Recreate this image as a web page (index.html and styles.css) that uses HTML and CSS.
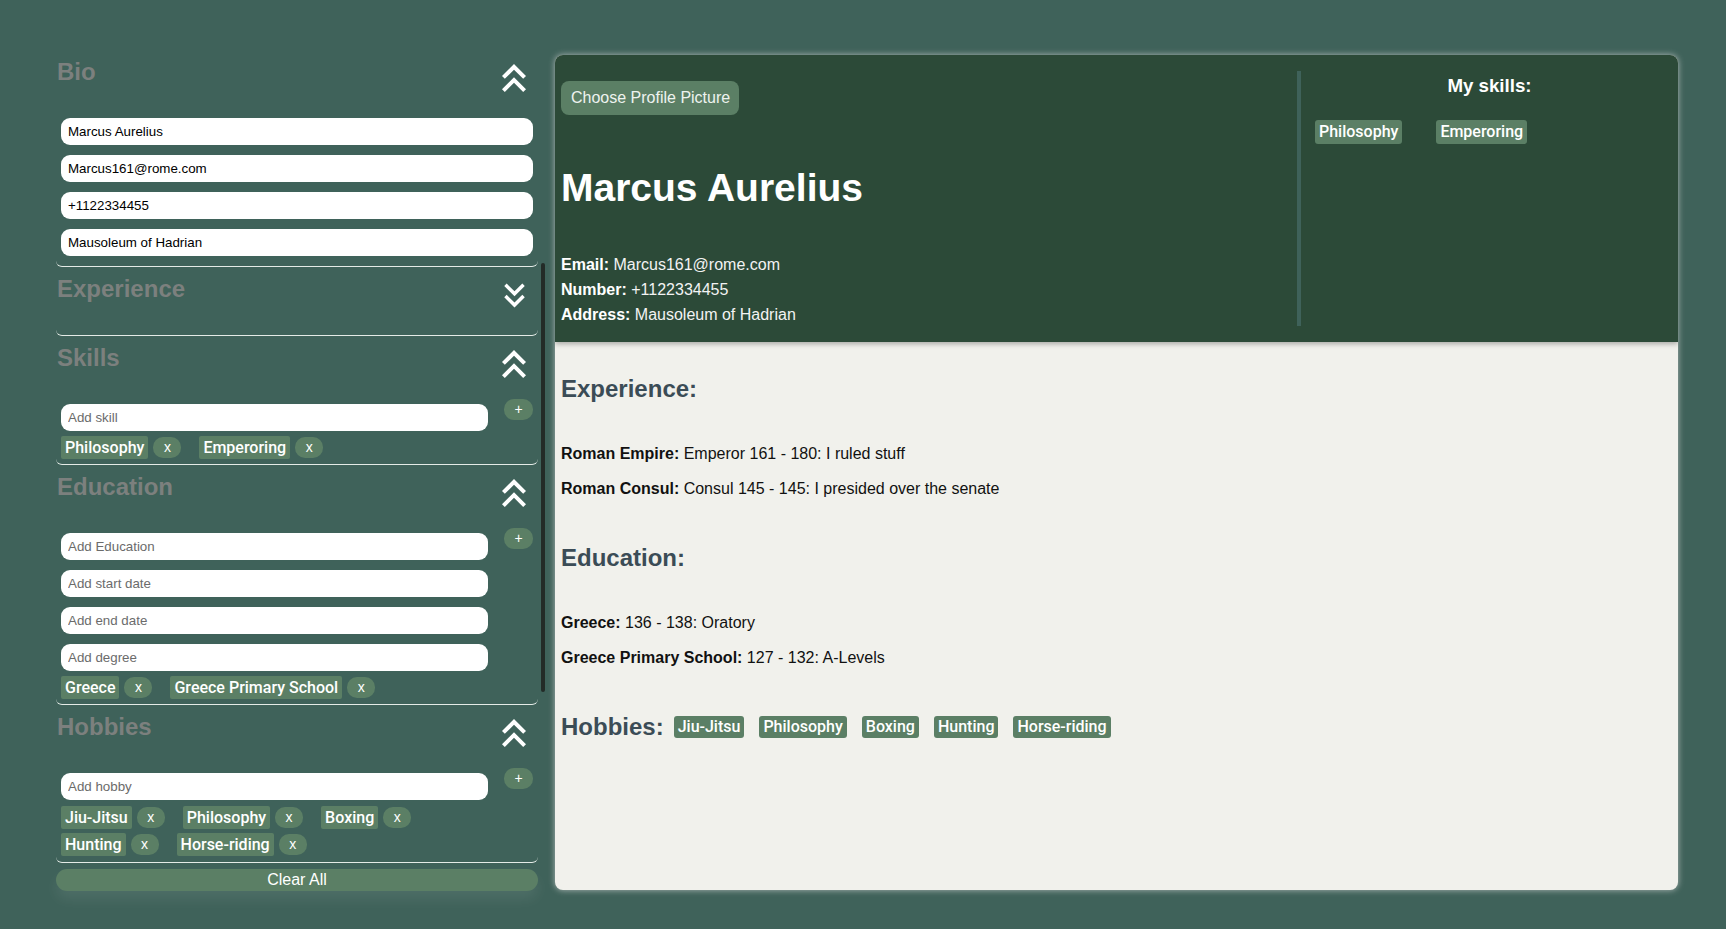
FILE: index.html
```html
<!DOCTYPE html>
<html lang="en">
<head>
<meta charset="utf-8">
<title>CV Builder</title>
<link rel="stylesheet" href="styles.css">
</head>
<body>
<div class="app">
  <aside class="sidebar">
    <section class="sec sec-bio">
      <div class="sec-head">
        <h2>Bio</h2>
        <span class="toggle"><svg class="ico-up" viewBox="0 0 24 24"><path d="M6 17.59L7.41 19 12 14.42 16.59 19 18 17.59l-6-6z M6 11L7.41 12.41 12 7.83 16.59 12.41 18 11l-6-6z"/></svg></span>
      </div>
      <div class="fields">
        <input class="field" type="text" value="Marcus Aurelius">
        <input class="field" type="text" value="Marcus161@rome.com">
        <input class="field" type="text" value="+1122334455">
        <input class="field" type="text" value="Mausoleum of Hadrian">
      </div>
    </section>

    <section class="sec sec-collapsed">
      <div class="sec-head">
        <h2>Experience</h2>
        <span class="toggle"><svg class="ico-down" viewBox="0 0 24 24"><path d="M18 6.41L16.59 5 12 9.58 7.41 5 6 6.41l6 6z M18 13L16.59 11.59 12 16.17 7.41 11.59 6 13l6 6z"/></svg></span>
      </div>
    </section>

    <section class="sec">
      <div class="sec-head">
        <h2>Skills</h2>
        <span class="toggle"><svg class="ico-up" viewBox="0 0 24 24"><path d="M6 17.59L7.41 19 12 14.42 16.59 19 18 17.59l-6-6z M6 11L7.41 12.41 12 7.83 16.59 12.41 18 11l-6-6z"/></svg></span>
      </div>
      <div class="add-row">
        <div class="add-col">
          <input class="field" type="text" placeholder="Add skill">
          <div class="tags">
            <span class="tag-item"><span class="tag">Philosophy</span><button class="remove">x</button></span>
            <span class="tag-item"><span class="tag">Emperoring</span><button class="remove">x</button></span>
          </div>
        </div>
        <button class="plus">+</button>
      </div>
    </section>

    <section class="sec">
      <div class="sec-head">
        <h2>Education</h2>
        <span class="toggle"><svg class="ico-up" viewBox="0 0 24 24"><path d="M6 17.59L7.41 19 12 14.42 16.59 19 18 17.59l-6-6z M6 11L7.41 12.41 12 7.83 16.59 12.41 18 11l-6-6z"/></svg></span>
      </div>
      <div class="add-row">
        <div class="add-col">
          <input class="field" type="text" placeholder="Add Education">
          <input class="field" type="text" placeholder="Add start date">
          <input class="field" type="text" placeholder="Add end date">
          <input class="field" type="text" placeholder="Add degree">
          <div class="tags">
            <span class="tag-item"><span class="tag">Greece</span><button class="remove">x</button></span>
            <span class="tag-item"><span class="tag">Greece Primary School</span><button class="remove">x</button></span>
          </div>
        </div>
        <button class="plus">+</button>
      </div>
    </section>

    <section class="sec sec-hobbies">
      <div class="sec-head">
        <h2>Hobbies</h2>
        <span class="toggle"><svg class="ico-up" viewBox="0 0 24 24"><path d="M6 17.59L7.41 19 12 14.42 16.59 19 18 17.59l-6-6z M6 11L7.41 12.41 12 7.83 16.59 12.41 18 11l-6-6z"/></svg></span>
      </div>
      <div class="add-row">
        <div class="add-col">
          <input class="field" type="text" placeholder="Add hobby">
          <div class="tags">
            <span class="tag-item"><span class="tag">Jiu-Jitsu</span><button class="remove">x</button></span>
            <span class="tag-item"><span class="tag">Philosophy</span><button class="remove">x</button></span>
            <span class="tag-item"><span class="tag">Boxing</span><button class="remove">x</button></span>
            <span class="tag-item"><span class="tag">Hunting</span><button class="remove">x</button></span>
            <span class="tag-item"><span class="tag">Horse-riding</span><button class="remove">x</button></span>
          </div>
        </div>
        <button class="plus">+</button>
      </div>
    </section>

    <button class="clear">Clear All</button>
    <div class="scroll-thumb"></div>
  </aside>

  <main class="cv">
    <header class="cv-head">
      <div class="cv-main">
        <button class="pic-btn">Choose Profile Picture</button>
        <h1 class="cv-name">Marcus Aurelius</h1>
        <p class="cv-line"><b>Email:</b> Marcus161@rome.com</p>
        <p class="cv-line"><b>Number:</b> +1122334455</p>
        <p class="cv-line"><b>Address:</b> Mausoleum of Hadrian</p>
      </div>
      <div class="cv-skills">
        <h3>My skills:</h3>
        <div class="chip-list chip-list-wide">
          <span class="chip">Philosophy</span>
          <span class="chip">Emperoring</span>
        </div>
      </div>
    </header>
    <div class="cv-body">
      <section class="cv-sec">
        <h2>Experience:</h2>
        <p class="entry"><b>Roman Empire:</b> Emperor 161 - 180: I ruled stuff</p>
        <p class="entry"><b>Roman Consul:</b> Consul 145 - 145: I presided over the senate</p>
      </section>
      <section class="cv-sec">
        <h2>Education:</h2>
        <p class="entry"><b>Greece:</b> 136 - 138: Oratory</p>
        <p class="entry"><b>Greece Primary School:</b> 127 - 132: A-Levels</p>
      </section>
      <section class="cv-hobbies">
        <h2>Hobbies:</h2>
        <div class="chip-list">
          <span class="chip chip-sm">Jiu-Jitsu</span>
          <span class="chip chip-sm">Philosophy</span>
          <span class="chip chip-sm">Boxing</span>
          <span class="chip chip-sm">Hunting</span>
          <span class="chip chip-sm">Horse-riding</span>
        </div>
      </section>
    </div>
  </main>
</div>
</body>
</html>
```

FILE: styles.css
```css
html, body {
  margin: 0;
  padding: 0;
}

body {
  background: #3f625a;
  font-family: "Liberation Sans", Arial, sans-serif;
  color: #111;
}

.app {
  display: flex;
  align-items: flex-start;
  gap: 17px;
  padding: 50px 48px 0 56px;
  height: 929px;
  box-sizing: border-box;
}

/* ---------- Sidebar ---------- */
.sidebar {
  width: 482px;
  flex: none;
  position: relative;
}

.sec {
  border-bottom: 1px solid #e4ebe7;
  border-radius: 0 0 6px 6px;
  padding-bottom: 5px;
}

.sec-bio {
  padding-bottom: 10px;
}

.sec-collapsed {
  padding-bottom: 0;
}

.sec-hobbies {
  padding-bottom: 6px;
}

.sec-hobbies .tags {
  margin-top: 6px;
}

.sec-head {
  display: flex;
  justify-content: space-between;
  align-items: flex-start;
  height: 68px;
}

.sec-head h2 {
  margin: 0;
  padding-left: 1px;
  font-size: 24px;
  line-height: 44px;
  font-weight: 700;
  color: #7c807e;
}

.toggle {
  width: 48px;
  height: 48px;
  margin-top: 4px;
  display: flex;
  align-items: center;
  justify-content: center;
}

.toggle svg {
  fill: #ffffff;
  display: block;
}

.ico-up {
  width: 48px;
  height: 48px;
}

.ico-down {
  width: 41px;
  height: 41px;
}

.fields {
  display: flex;
  flex-direction: column;
  gap: 10px;
  padding: 0 5px;
}

.field {
  display: block;
  width: 100%;
  box-sizing: border-box;
  height: 27px;
  border: 0;
  border-radius: 9px;
  padding: 0 7px;
  background: #ffffff;
  color: #000;
  font-family: "Liberation Sans", Arial, sans-serif;
  font-size: 13.33px;
  outline: none;
}

.field::placeholder {
  color: #6b6b6b;
}

.add-row {
  display: flex;
  align-items: flex-start;
  gap: 16px;
  padding: 0 5px;
}

.add-col {
  flex: 1;
  min-width: 0;
}

.add-col .field + .field {
  margin-top: 10px;
}

.plus {
  flex: none;
  width: 29px;
  height: 21px;
  margin-top: -5px;
  border: 0;
  border-radius: 10px;
  background: #5b7f65;
  color: #ffffff;
  font-family: "Liberation Sans", Arial, sans-serif;
  font-size: 14px;
  line-height: 21px;
  padding: 0;
}

.tags {
  display: flex;
  flex-wrap: wrap;
  column-gap: 18px;
  row-gap: 4px;
  margin-top: 5px;
}

.tag-item {
  display: inline-flex;
  align-items: center;
  gap: 5px;
}

.tag {
  display: inline-block;
  background: #5b7f65;
  color: #ffffff;
  font-family: Roboto, "Liberation Sans", sans-serif;
  font-weight: 500;
  font-size: 16px;
  line-height: 23px;
  padding: 0 4px;
  border-radius: 2px;
  white-space: nowrap;
}

.remove {
  width: 28px;
  height: 21px;
  border: 0;
  border-radius: 10px;
  background: #5b7f65;
  color: #ffffff;
  font-family: "Liberation Sans", Arial, sans-serif;
  font-size: 14px;
  line-height: 21px;
  padding: 0;
}

.clear {
  display: block;
  width: 100%;
  height: 22px;
  margin-top: 6px;
  border: 0;
  border-radius: 11px;
  background: #5b7f65;
  color: #ffffff;
  font-family: "Liberation Sans", Arial, sans-serif;
  font-size: 16px;
  line-height: 22px;
  padding: 0;
  box-shadow: 0 8px 14px rgba(255, 255, 255, 0.08);
}

.scroll-thumb {
  position: absolute;
  left: 485px;
  top: 213px;
  width: 4px;
  height: 429px;
  border-radius: 2px;
  background: #232b27;
}

/* ---------- CV panel ---------- */
.cv {
  flex: 1;
  margin-top: 5px;
  height: 835px;
  border-radius: 8px;
  background: #f1f1ec;
  overflow: hidden;
  box-shadow: 0 0 6px rgba(215, 215, 215, 0.75);
}

.cv-head {
  display: flex;
  align-items: stretch;
  background: #2c4a38;
  color: #ffffff;
  box-shadow: 0 2px 5px rgba(0, 0, 0, 0.3);
  position: relative;
}

.cv-main {
  flex: 1;
  padding: 26px 6px 15px;
}

.pic-btn {
  display: block;
  height: 34px;
  padding: 0 9px 0 10px;
  border: 0;
  border-radius: 8px;
  background: #5b7f65;
  color: #eef3ef;
  font-family: "Liberation Sans", Arial, sans-serif;
  font-size: 16px;
}

.cv-name {
  margin: 50px 0 41px;
  font-size: 39px;
  line-height: 46px;
  font-weight: 700;
  color: #ffffff;
}

.cv-line {
  margin: 0;
  font-size: 16px;
  line-height: 25px;
  color: #f3f3f3;
}

.cv-line b {
  color: #ffffff;
}

.cv-skills {
  width: 381px;
  flex: none;
  box-sizing: border-box;
  margin: 16px 0;
  border-left: 4px solid #3f625a;
  padding: 4px 14px 0;
}

.cv-skills h3 {
  margin: 0;
  text-align: center;
  font-size: 18.72px;
  line-height: 22px;
  font-weight: 700;
}

.chip-list {
  display: flex;
  flex-wrap: wrap;
  gap: 15px;
}

.chip-list-wide {
  margin-top: 23px;
  gap: 34px;
}

.chip {
  display: inline-block;
  background: #5b7f65;
  color: #ffffff;
  font-family: Roboto, "Liberation Sans", sans-serif;
  font-weight: 500;
  font-size: 16px;
  line-height: 24px;
  padding: 0 4px;
  border-radius: 3px;
  white-space: nowrap;
}

.chip-sm {
  line-height: 22px;
}

.cv-body {
  padding: 33px 6px 0;
}

.cv-body h2 {
  margin: 0;
  font-size: 24px;
  line-height: 28px;
  font-weight: 700;
  color: #3b4c56;
}

.cv-sec {
  margin-bottom: 43px;
}

.cv-sec h2 {
  margin-bottom: 38px;
}

.entry {
  margin: 0 0 10px;
  font-size: 16px;
  line-height: 25px;
  color: #111;
}

.cv-hobbies {
  display: flex;
  align-items: center;
  gap: 10px;
}
```
